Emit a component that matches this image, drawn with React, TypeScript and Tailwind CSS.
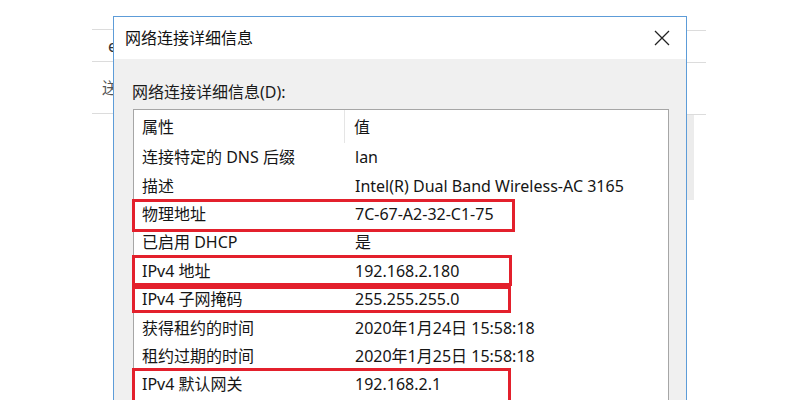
import React from "react";

const FONT = {
  fontFamily: '"Noto Sans", "Noto Sans CJK SC", sans-serif',
};

type Row = { k: string; v: string; box?: string };

const rows: Row[] = [
  { k: "连接特定的 DNS 后缀", v: "lan" },
  { k: "描述", v: "Intel(R) Dual Band Wireless-AC 3165" },
  { k: "物理地址", v: "7C-67-A2-32-C1-75", box: "-top-[1px] -left-[2px] w-[383px] h-[33px]" },
  { k: "已启用 DHCP", v: "是" },
  { k: "IPv4 地址", v: "192.168.2.180", box: "-top-[2px] -left-[2px] w-[380px] h-[31px]" },
  { k: "IPv4 子网掩码", v: "255.255.255.0", box: "top-[1px] -left-[2px] w-[379px] h-[27px]" },
  { k: "获得租约的时间", v: "2020年1月24日 15:58:18" },
  { k: "租约过期的时间", v: "2020年1月25日 15:58:18" },
  { k: "IPv4 默认网关", v: "192.168.2.1", box: "-top-[2px] -left-[2px] w-[379px] h-[40px]" },
];

function DesktopFragment({ side }: { side: "left" | "right" }) {
  return (
    <div className="flex flex-col w-[26px]">
      <div className="h-[13px]" />
      <div className="h-px bg-[#dcdcdc]" />
      <div className={`h-[31px] flex items-center text-[16px] text-[#333] ${side === "left" ? "justify-end pr-[1px]" : ""}`}>
        {side === "left" ? "e" : ""}
      </div>
      <div className="h-px bg-[#dcdcdc]" />
      <div className={`h-[51px] flex items-center text-[16px] text-[#555] ${side === "left" ? "justify-end" : ""}`}>
        {side === "left" ? "送" : ""}
      </div>
      <div className="h-px bg-[#dcdcdc]" />
      {side === "right" && <div className="ml-[6px] w-[8px] h-[85px] bg-[#ececec]" />}
    </div>
  );
}

export default function App() {
  return (
    <div
      className="relative w-[787px] h-[400px] overflow-hidden bg-white text-[#151515]"
      style={FONT}
    >
      {/* windows behind the dialog */}
      <div className="absolute left-[92px] top-[16px]">
        <DesktopFragment side="left" />
      </div>
      <div className="absolute left-[680px] top-[17px]">
        <DesktopFragment side="right" />
      </div>

      {/* dialog window */}
      <div className="absolute left-[113px] top-[16px] w-[574px] h-[400px] border border-[#5d9cd8] bg-[#f0f0f0] flex flex-col">
        <div className="h-[42px] bg-white flex items-center justify-between pl-[11px] pr-[15px] shrink-0">
          <span className="text-[16px] leading-[20px] text-[#111]">网络连接详细信息</span>
          <svg width="18" height="18" viewBox="0 0 18 18">
            <path d="M2 2 L16 16 M16 2 L2 16" stroke="#222" strokeWidth="1.3" fill="none" />
          </svg>
        </div>
        <div className="flex flex-col pl-[17px] pt-[21px]">
          <div className="text-[16px] leading-[24px] pl-px text-[#1a1a1a]">网络连接详细信息(D):</div>
          <div className="mt-[5px] ml-[2px] w-[536px] h-[300px] bg-white border border-[#a6a6a6] flex flex-col">
            <div className="h-[33px] flex items-center shrink-0">
              <div className="w-[211px] h-full flex items-center pl-[8px] border-r border-[#e5e5e5]">属性</div>
              <div className="pl-[9px]">值</div>
            </div>
            {rows.map((r) => (
              <div key={r.k} className="relative h-[28.4px] flex items-center shrink-0 text-[16px]">
                <div className="w-[211px] pl-[8px] whitespace-nowrap">{r.k}</div>
                <div className="pl-[10px] whitespace-nowrap">{r.v}</div>
                {r.box && (
                  <div className={`absolute border-[3px] border-[#e3202c] ${r.box}`} />
                )}
              </div>
            ))}
          </div>
        </div>
      </div>
    </div>
  );
}
